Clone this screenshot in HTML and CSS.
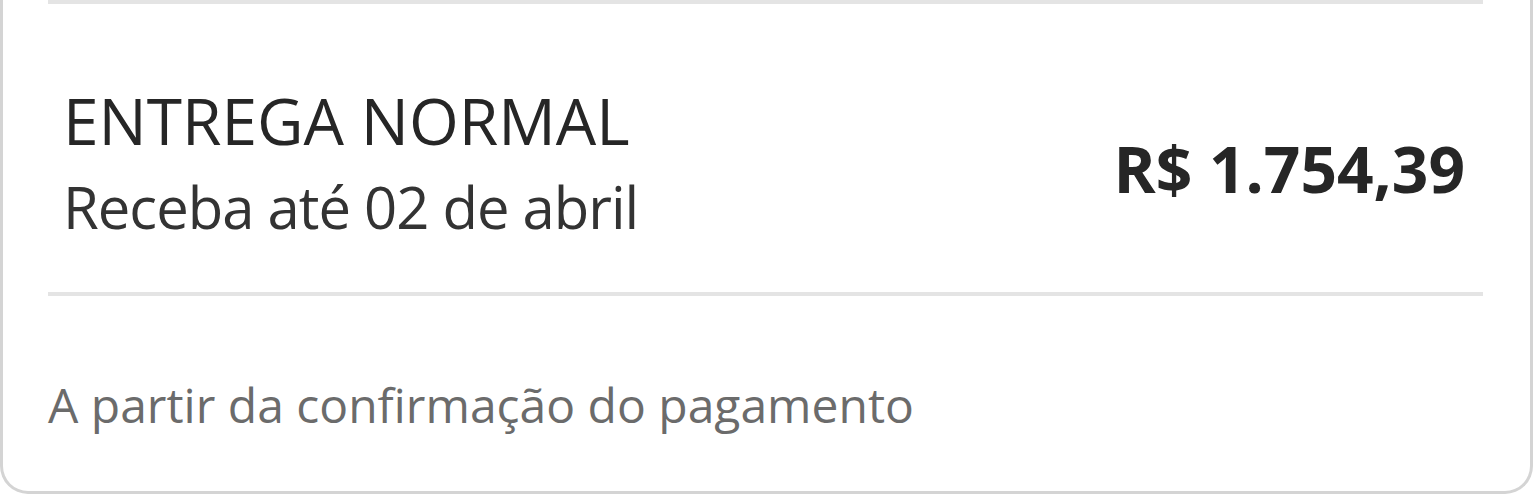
FILE: index.html
```html
<!DOCTYPE html>
<html>
<head>
<meta http-equiv="Content-Type" content="text/html; charset=UTF-8">
<title>Entrega</title>
<link rel="stylesheet" href="styles.css">
</head>
<body>
<div class="card">
	<div class="divider"></div>
	<div class="shipping">
		<div class="shipping_info">
			<div class="shipping_name">ENTREGA NORMAL</div>
			<div class="shipping_date">Receba até 02 de abril</div>
		</div>
		<div class="shipping_price">R$ 1.754,39</div>
	</div>
	<div class="divider"></div>
	<div class="note">A partir da confirmação do pagamento</div>
</div>
</body>
</html>
```

FILE: styles.css
```css
body {
	margin: 0;
	background: #fff;
	font-family: "Open Sans", "Noto Sans", sans-serif;
}
.card {
	width: 1533px;
	box-sizing: border-box;
	border: 3px solid #d4d4d4;
	border-top: none;
	border-radius: 0 0 28px 28px;
	padding: 0 47px 55px 45px;
}
.divider {
	height: 4px;
	background: #e4e4e4;
}
.shipping {
	display: flex;
	align-items: center;
	justify-content: space-between;
	padding: 75px 18px 41px 15px;
}
.shipping_name {
	font-size: 64px;
	line-height: 84px;
	color: #262626;
}
.shipping_date {
	font-size: 58px;
	line-height: 88px;
	letter-spacing: -1px;
	color: #333;
}
.shipping_price {
	font-size: 64px;
	font-weight: bold;
	color: #262626;
	padding-top: 6px;
}
.note {
	margin-top: 78px;
	font-size: 48px;
	line-height: 62px;
	color: #6b6b6b;
}
```
